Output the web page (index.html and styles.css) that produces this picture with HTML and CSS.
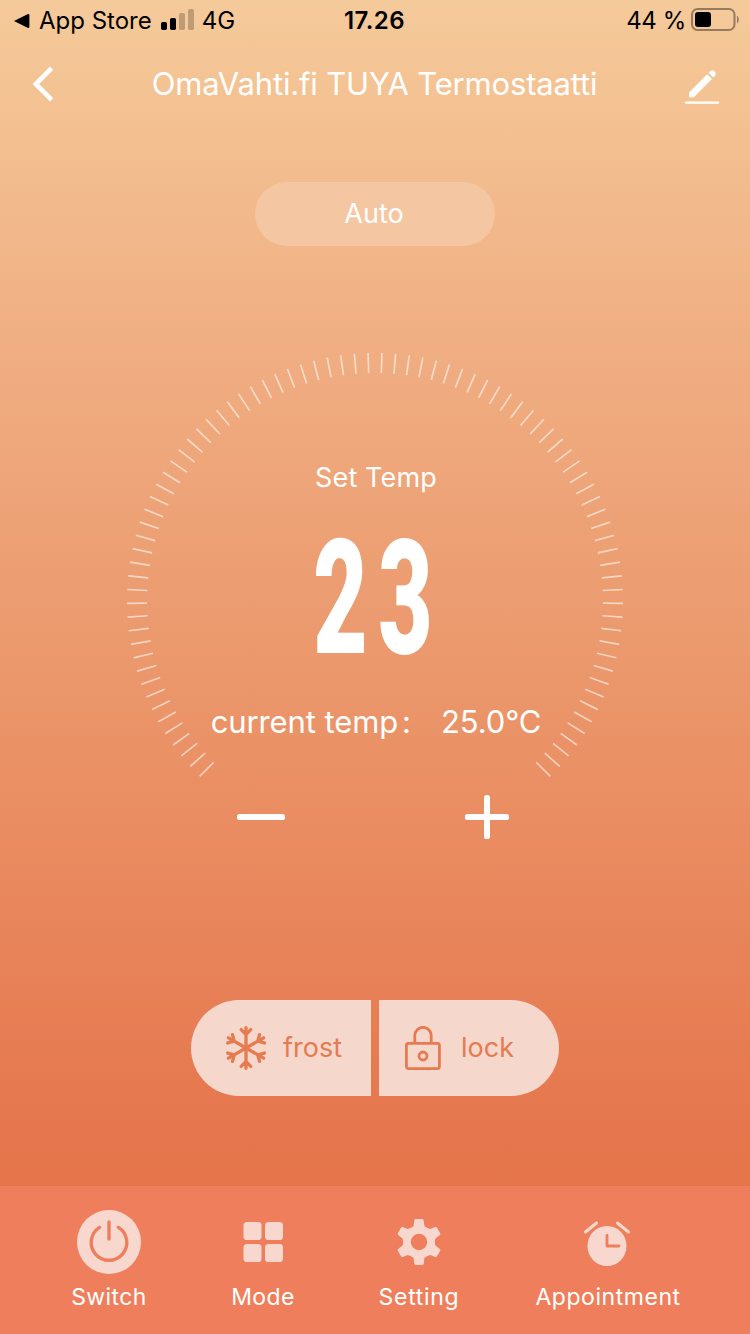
FILE: index.html
```
<!DOCTYPE html>
<html lang="en">
<head>
<meta charset="utf-8">
<title>Thermostat</title>
<link rel="stylesheet" href="styles.css">
</head>
<body>
<main class="screen">
  <div class="status">
    <div class="status-left">
      <svg class="back-app" width="16" height="16" viewBox="0 0 16 16"><path d="M0 8 13.5 1.2Q15.4 .6 15.4 2.2V13.8Q15.4 15.4 13.5 14.8Z" fill="#000"/></svg>
      <span class="app-name">App Store</span>
      <svg class="signal" width="34" height="22" viewBox="0 0 34 22"><rect x="0" y="13" width="6" height="8" rx="1.8"/><rect x="9" y="9" width="6" height="12" rx="1.8"/><g opacity=".22"><rect x="18" y="4" width="6" height="17" rx="1.8"/><rect x="27" y="0" width="6" height="21" rx="1.8"/></g></svg>
      <span class="network">4G</span>
    </div>
    <span class="time">17.26</span>
    <div class="status-right">
      <span class="percent">44 %</span>
      <svg class="battery" width="48" height="23" viewBox="0 0 48 23"><rect x="1" y="1" width="42.5" height="21" rx="5.5" fill="none" stroke="#967a5e" stroke-width="2"/><rect x="4" y="4" width="16" height="15" rx="3" fill="#000"/><path d="M46 7.5Q47.8 8.8 47.8 11.5T46 15.5Z" fill="#967a5e"/></svg>
    </div>
  </div>
  <header class="titlebar">
    <svg class="back" width="24" height="36" viewBox="0 0 24 36"><path d="M20.6 2.2 4.8 18 20.6 33.8" fill="none" stroke="#fff" stroke-width="4.6"/></svg>
    <h1 class="title">OmaVahti.fi TUYA Termostaatti</h1>
    <svg class="edit" width="36" height="36" viewBox="0 0 36 36"><path d="M5 23.4 23.2 5.2 28 10 9.8 28.2H5Z" fill="#fff"/><path d="M24.6 3.8 26.4 2Q28.6.4 30.6 2.4T31 6.8L29.4 8.6Z" fill="#fff"/><path d="M2 33.6H34" stroke="#fff" stroke-width="2.4" stroke-linecap="round"/></svg>
  </header>
  <div class="mode-pill"><span class="mode-label">Auto</span></div>
  <section class="dial">
    <svg class="ticks" width="500" height="430" viewBox="-250 -250 500 430"><path d="M-167.7 168.88A238 238 0 1 1 167.7 168.88" pathLength="270.4" stroke-dasharray="0.4 2.77647"/></svg>
    <div class="readout">
      <span class="set-label">Set Temp</span>
      <span class="set-value">23</span>
      <div class="current"><span class="current-label">current temp</span><span class="colon">:</span><span class="current-value">25.0°C</span></div>
    </div>
  </section>
  <div class="adjust">
    <svg width="48" height="6" viewBox="0 0 48 6"><rect width="48" height="6" rx="2.6" fill="#fff"/></svg>
    <svg width="44" height="44" viewBox="0 0 44 44"><rect y="19" width="44" height="6" rx="2.6" fill="#fff"/><rect x="19" width="6" height="44" rx="2.6" fill="#fff"/></svg>
  </div>
  <div class="actions">
    <div class="action frost">
      <svg width="44" height="46" viewBox="-22 -23 44 46"><defs><path id="arm" d="M0 0V-20.3M-4.8-18.4 0-13.6 4.8-18.4"/></defs><g fill="none" stroke="#e67a50" stroke-width="3.3" stroke-linecap="round"><use href="#arm"/><use href="#arm" transform="rotate(60)"/><use href="#arm" transform="rotate(120)"/><use href="#arm" transform="rotate(180)"/><use href="#arm" transform="rotate(240)"/><use href="#arm" transform="rotate(300)"/></g></svg>
      <span class="action-label">frost</span>
    </div>
    <div class="action lock">
      <svg width="36" height="44" viewBox="0 0 36 44"><g fill="none" stroke="#e67a50" stroke-width="2.8"><rect x="1.4" y="17.4" width="33" height="25.2" rx="2"/><path d="M9.8 17V9.5A8.2 8.2 0 0 1 26.2 9.5V17"/><circle cx="18" cy="30" r="4"/></g></svg>
      <span class="action-label">lock</span>
    </div>
  </div>
  <nav class="tabs">
    <div class="tab switch">
      <svg width="64" height="64" viewBox="0 0 64 64"><circle cx="32" cy="32" r="32" fill="#f8d8ce"/><path d="M22.6 17.4A17.8 17.8 0 1 0 41.4 17.4M32 12V29" fill="none" stroke="#ef7f5c" stroke-width="3.4" stroke-linecap="round"/></svg>
      <span>Switch</span>
    </div>
    <div class="tab mode">
      <svg width="64" height="64" viewBox="0 0 64 64" fill="#f8d8ce"><rect x="12.5" y="12" width="18" height="18" rx="3.6"/><rect x="34" y="12" width="18" height="18" rx="3.6"/><rect x="12.5" y="34" width="18" height="18" rx="3.6"/><rect x="34" y="34" width="18" height="18" rx="3.6"/></svg>
      <span>Mode</span>
    </div>
    <div class="tab setting">
      <svg width="64" height="64" viewBox="-32 -32 64 64"><path fill="#f8d8ce" fill-rule="evenodd" d="M-4.6-21.7Q-4.4-23-3.2-23H3.2Q4.4-23 4.6-21.7L5.5-15.8Q8.4-13.5 11.4-13.1L16.2-14.9Q17.4-15.2 18-14.2L21.2-8.8Q21.8-7.7 20.8-6.9L16.2-3.3Q15.4 0 16.2 3.3L20.8 6.9Q21.8 7.7 21.2 8.8L18 14.2Q17.4 15.2 16.2 14.9L11.4 13.1Q8.4 13.5 5.5 15.8L4.6 21.7Q4.4 23 3.2 23H-3.2Q-4.4 23-4.6 21.7L-5.5 15.8Q-8.4 13.5-11.4 13.1L-16.2 14.9Q-17.4 15.2-18 14.2L-21.2 8.8Q-21.8 7.7-20.8 6.9L-16.2 3.3Q-15.4 0-16.2-3.3L-20.8-6.9Q-21.8-7.7-21.2-8.8L-18-14.2Q-17.4-15.2-16.2-14.9L-11.4-13.1Q-8.4-13.5-5.5-15.8ZM0-8.2A8.2 8.2 0 1 0 0 8.2A8.2 8.2 0 1 0 0-8.2Z"/></svg>
      <span>Setting</span>
    </div>
    <div class="tab appointment">
      <svg width="64" height="64" viewBox="0 0 64 64"><ellipse cx="31" cy="36" rx="19.5" ry="20" fill="#f8d8ce"/><path d="M9.5 22 20.5 13M41.5 13 52.5 22" stroke="#f8d8ce" stroke-width="3" stroke-linecap="round"/><path d="M31 25.5V36H43" fill="none" stroke="#ef7f5c" stroke-width="2.8" stroke-linecap="round" stroke-linejoin="round"/></svg>
      <span>Appointment</span>
    </div>
  </nav>
</main>
</body>
</html>
```
FILE: styles.css
```
* { box-sizing: border-box; }
body { margin: 0; font-family: Inter, "Liberation Sans", sans-serif; color: #fff; }
svg { display: block; flex: none; }
span, h1 { white-space: nowrap; }

.screen {
  display: flex;
  flex-direction: column;
  width: 750px;
  height: 1334px;
  overflow: hidden;
  background: linear-gradient(#f5ca9a 0, #f0ae82 350px, #eb9b6f 620px, #ea8c61 830px, #e67950 1090px, #e5744a 1186px);
}

.status {
  display: grid;
  grid-template-columns: 1fr auto 1fr;
  align-items: center;
  height: 40px;
  padding: 0 11px 0 14px;
  color: #000;
  font-size: 24px;
}
.status-left, .status-right { display: flex; align-items: center; padding-top: 1px; }
.status-right { justify-content: flex-end; }
.app-name { margin-left: 9px; letter-spacing: 0; }
.signal { margin: -2px 0 0 9px; }
.network { margin-left: 7px; }
.time { font-weight: 600; letter-spacing: 0.4px; margin-left: -4px; padding-top: 1px; }
.percent { margin-right: 5px; letter-spacing: -0.4px; }
.battery { margin-top: -2px; }

.titlebar {
  display: flex;
  align-items: center;
  justify-content: space-between;
  height: 88px;
  padding: 0 30px 0 31px;
}
.title { margin: 0 0 0 10px; font-size: 31px; font-weight: 400; line-height: 40px; letter-spacing: -0.17px; }
.edit { margin-top: 6px; }

.mode-pill {
  display: flex;
  align-items: center;
  justify-content: center;
  align-self: center;
  width: 240px;
  height: 64px;
  margin-top: 54px;
  padding: 0 2px 2px 0;
  border-radius: 32px;
  background: #f4c7a2;
  font-size: 27px;
}

.dial { display: grid; justify-items: center; margin-top: 105px; height: 430px; }
.ticks, .readout { grid-area: 1 / 1; }
.ticks path { fill: none; stroke: #fff; stroke-opacity: .58; stroke-width: 20; }
.readout { display: flex; flex-direction: column; align-items: center; padding-top: 107px; }
.set-label { margin-left: 2px; font-size: 27px; line-height: 40px; letter-spacing: 0.15px; }
.set-value {
  margin-top: 36px;
  height: 130px;
  font-family: Roboto, sans-serif;
  font-size: 159px;
  line-height: 130px;
  font-weight: 900;
  letter-spacing: 18px;
  margin-right: -18px;
  transform: translateX(-6px) scaleX(.59);
}
.current { display: flex; align-items: center; margin: 38px 0 0 2px; font-size: 31px; line-height: 40px; letter-spacing: -0.1px; }
.colon { margin-left: 4px; }
.current-value { margin-left: 30px; }

.adjust { display: flex; align-items: center; justify-content: space-between; height: 44px; margin: 14px 241px 0 237px; }

.actions { display: flex; justify-content: center; gap: 8px; margin-top: 161px; }
.action { display: flex; align-items: center; width: 180px; height: 96px; background: #f5d8cb; color: #e67a50; font-size: 27px; }
.action-label { padding-bottom: 2px; }
.frost { padding-left: 33px; gap: 15px; border-radius: 48px 0 0 48px; }
.lock { padding-left: 26px; gap: 20px; border-radius: 0 48px 48px 0; }

.tabs { display: flex; height: 148px; margin-top: auto; padding: 24px 0 0 32px; background: #ef7f5c; font-size: 23px; }
.tab { display: flex; flex-direction: column; align-items: center; gap: 8px; width: 154px; line-height: 30px; letter-spacing: 0.4px; }
.setting { width: 158px; letter-spacing: 0.7px; }
.appointment { width: 220px; letter-spacing: 0.55px; }
```
